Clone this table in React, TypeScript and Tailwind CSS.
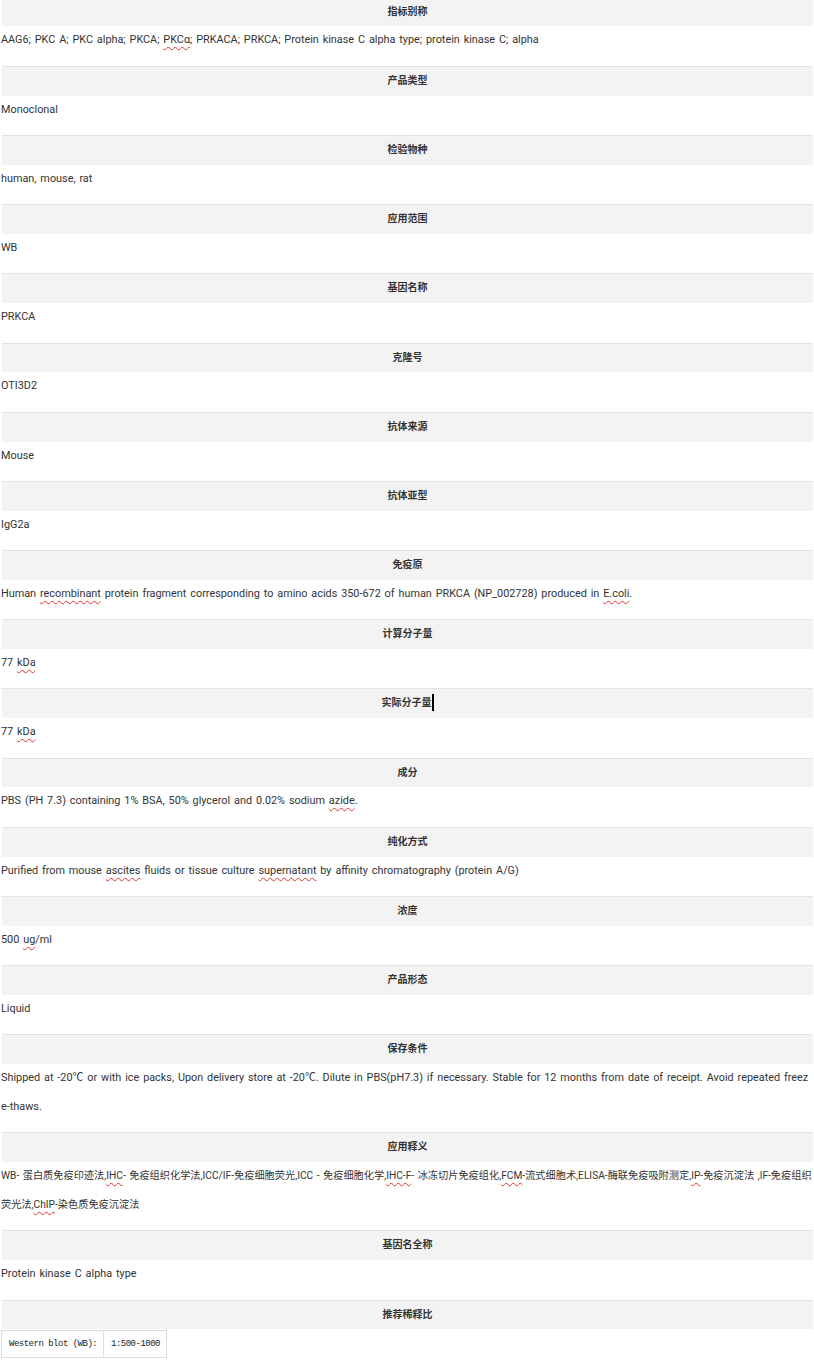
import type { ReactNode } from 'react';

// spellcheck squiggle, as the editor shows it
function Sp({ children }: { children: ReactNode }) {
  return (
    <span className="underline decoration-wavy decoration-[#e0362b] decoration-1 underline-offset-[3px]">
      {children}
    </span>
  );
}

type Section = { title: ReactNode; body: ReactNode };

const sections: Section[] = [
  {
    title: '指标别称',
    body: (
      <>
        AAG6; PKC A; PKC alpha; PKCA; <Sp>PKCα</Sp>; PRKACA; PRKCA; Protein kinase C alpha type; protein kinase C; alpha
      </>
    ),
  },
  { title: '产品类型', body: 'Monoclonal' },
  { title: '检验物种', body: 'human, mouse, rat' },
  { title: '应用范围', body: 'WB' },
  { title: '基因名称', body: 'PRKCA' },
  { title: '克隆号', body: 'OTI3D2' },
  { title: '抗体来源', body: 'Mouse' },
  { title: '抗体亚型', body: 'IgG2a' },
  {
    title: '免疫原',
    body: (
      <>
        Human <Sp>recombinant</Sp> protein fragment corresponding to amino acids 350-672 of human PRKCA (NP_002728) produced in <Sp>E.coli</Sp>.
      </>
    ),
  },
  {
    title: '计算分子量',
    body: (
      <>
        77 <Sp>kDa</Sp>
      </>
    ),
  },
  {
    title: (
      <>
        实际分子量
        <span className="inline-block w-[2px] h-[17px] bg-black align-middle -mt-[2px]" />
      </>
    ),
    body: (
      <>
        77 <Sp>kDa</Sp>
      </>
    ),
  },
  {
    title: '成分',
    body: (
      <>
        PBS (PH 7.3) containing 1% BSA, 50% glycerol and 0.02% sodium <Sp>azide</Sp>.
      </>
    ),
  },
  {
    title: '纯化方式',
    body: (
      <>
        Purified from mouse <Sp>ascites</Sp> fluids or tissue culture <Sp>supernatant</Sp> by affinity chromatography (protein A/G)
      </>
    ),
  },
  {
    title: '浓度',
    body: (
      <>
        500 <Sp>ug</Sp>/ml
      </>
    ),
  },
  { title: '产品形态', body: 'Liquid' },
  {
    title: '保存条件',
    body: (
      <>
        <div className="whitespace-nowrap overflow-hidden">
          Shipped at -20℃ or with ice packs, Upon delivery store at -20℃. Dilute in PBS(pH7.3) if necessary. Stable for 12 months from date of receipt. Avoid repeated freez
        </div>
        <div>e-thaws.</div>
      </>
    ),
  },
  {
    title: '应用释义',
    body: (
      <div className="text-[10.2px] [word-spacing:1px]">
        <div className="whitespace-nowrap overflow-hidden">
          WB- 蛋白质免疫印迹法,<Sp>IHC</Sp>- 免疫组织化学法,ICC/IF-免疫细胞荧光,ICC - 免疫细胞化学,<Sp>IHC-F</Sp>- 冰冻切片免疫组化,<Sp>FCM</Sp>-流式细胞术,ELISA-酶联免疫吸附测定,<Sp>IP</Sp>-免疫沉淀法 ,IF-免疫组织
        </div>
        <div>
          荧光法,<Sp>ChIP</Sp>-染色质免疫沉淀法
        </div>
      </div>
    ),
  },
  { title: '基因名全称', body: 'Protein kinase C alpha type' },
];

export default function App() {
  return (
    <div
      className="min-h-screen bg-white text-[#333] overflow-hidden"
      style={{ fontFamily: 'Roboto, "Noto Sans CJK SC", sans-serif' }}
    >
      <div className="-mt-[3.4px]">
        {sections.map((s, i) => (
          <div key={i}>
            <div className="ml-[2px] mr-[1px] border-t border-[#e3e3e3] bg-[#f3f3f3] text-center text-[10px] font-bold leading-[28.8px]">
              {s.title}
            </div>
            <div className="pl-[1px] pb-[10.6px] text-[10.85px] leading-[28.8px] [word-spacing:1.2px]">
              {s.body}
            </div>
          </div>
        ))}

        {/* last block: dilution table */}
        <div className="ml-[2px] mr-[1px] border-t border-[#e3e3e3] bg-[#f3f3f3] text-center text-[10px] font-bold leading-[28.8px]">
          推荐稀释比
        </div>
        <div
          className="ml-[1px] mt-[1px] flex w-[166px] h-[28px] border border-[#dcdcdc] text-[9px] tracking-[-0.5px] text-[#222]"
          style={{ fontFamily: '"Liberation Mono", "Noto Sans CJK SC", monospace' }}
        >
          <div className="w-[102px] shrink-0 border-r border-[#dcdcdc] pl-[7px] flex items-center whitespace-nowrap">
            Western blot (WB):
          </div>
          <div className="flex-1 pl-[7px] flex items-center whitespace-nowrap">1:500-1000</div>
        </div>
      </div>
    </div>
  );
}
